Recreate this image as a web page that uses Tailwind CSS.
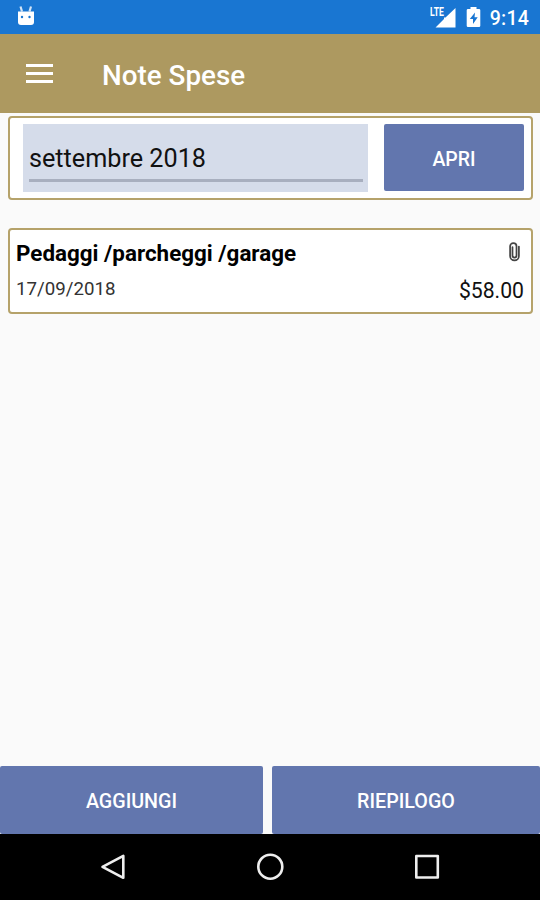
<!DOCTYPE html>
<html lang="it">
<head>
    <meta charset="UTF-8">
    <meta name="viewport" content="width=device-width, initial-scale=1.0">
    <title>Note Spese</title>
    <script src="https://cdn.jsdelivr.net/npm/@tailwindcss/browser@4"></script>
</head>
<body class="bg-[#fafafa] font-['Roboto',sans-serif] text-black">
<div class="flex h-[900px] w-[540px] flex-col overflow-hidden">

    <!-- Status bar -->
    <div class="flex h-[34px] shrink-0 items-center bg-[#1976d2] pl-[17px] pr-[11px] text-white">
        <svg class="mr-auto h-[22px] w-[18px]" viewBox="0 0 18 22" fill="none">
            <path d="M1 5.500h16V16a3 3 0 0 1-3 3H4a3 3 0 0 1-3-3z" fill="#fff"/>
            <path d="M3.500 .5 5 5.500M14 .5 12.500 5.500" stroke="#fff" stroke-opacity=".8" stroke-width="2.200"/>
            <circle cx="5" cy="11" r="1.200" fill="#1976d2"/>
            <circle cx="12.500" cy="11" r="1.200" fill="#1976d2"/>
        </svg>
        <div class="relative h-[22px] w-[26px]">
            <span class="absolute left-0 top-[1px] origin-left scale-x-[.72] text-[12px] font-bold leading-[11px]">LTE</span>
            <svg class="h-[22px] w-[26px]" viewBox="0 0 26 22"><path d="M25.500 2v19.500H5.500L14 13V11.500h1.500z" fill="#fff"/></svg>
        </div>
        <svg class="ml-[10px] h-[22px] w-[15px]" viewBox="0 0 15 22">
            <path d="M4.500 1h6v2H13a1.300 1.300 0 0 1 1.300 1.300v15.400A1.300 1.300 0 0 1 13 21H2a1.300 1.300 0 0 1-1.300-1.300V4.300A1.300 1.300 0 0 1 2 3h2.500z" fill="#fff"/>
            <path d="M9 6.500 3.800 13H7v5l4.700-6.800H8.500z" fill="#1976d2"/>
        </svg>
        <span class="ml-[9px] pt-[3px] text-[19.500px] font-medium leading-none tracking-[.2px]">9:14</span>
    </div>

    <!-- Toolbar -->
    <header class="flex h-[79px] shrink-0 items-center bg-[#ad9960] pl-[26px] text-white">
        <div class="-mt-[1px] flex w-[27px] flex-col gap-[5px]">
            <div class="h-[3px] bg-white"></div>
            <div class="h-[3px] bg-white"></div>
            <div class="h-[3px] bg-white"></div>
        </div>
        <h1 class="ml-[49px] pt-[4px] text-[27.800px] font-medium leading-none">Note Spese</h1>
    </header>

    <main class="flex grow flex-col px-2 pt-[3px]">
        <!-- Month -->
        <section class="flex h-[84px] w-[525px] gap-4 rounded-[4px] border-2 border-[#b5a26a] bg-white pl-[13px] pr-[6px] pt-[6px]">
            <div class="h-[68px] w-[345px] bg-[#d5dcea] px-[6px] pt-[17px]">
                <div class="h-[41px] w-[334px] border-b-[3px] border-[#a8afbf] text-[25.200px] leading-[35px] text-[#111]">settembre 2018</div>
            </div>
            <button class="h-[67px] w-[140px] rounded-[2px] bg-[#6276ae] pt-[4px] text-[19.500px] font-medium text-white">APRI</button>
        </section>

        <!-- Expense -->
        <section class="mt-7 flex h-[86px] w-[525px] justify-between rounded-[4px] border-2 border-[#b5a26a] bg-white pl-[6px] pr-[7px]">
            <div>
                <h2 class="pt-[9px] text-[22.400px] font-bold leading-[28px]">Pedaggi /parcheggi /garage</h2>
                <p class="pt-[10px] text-[18.700px] leading-[24px] text-[#333]">17/09/2018</p>
            </div>
            <div class="flex flex-col items-end">
                <svg class="mr-[4px] mt-[12px] h-[20px] w-[11px]" viewBox="0 0 12 22" preserveAspectRatio="none" fill="none" stroke="#444" stroke-width="1.900" stroke-linecap="round">
                    <path d="M10.800 5v10.500a4.800 4.800 0 0 1-9.600 0V4.700a3.500 3.500 0 0 1 7 0v10.200a2.200 2.200 0 0 1-4.400 0V5.500"/>
                </svg>
                <p class="pt-[15px] text-[21.200px] leading-[28px] text-[#111]">$58.00</p>
            </div>
        </section>
    </main>

    <!-- Actions -->
    <div class="flex h-[68px] shrink-0 gap-[9px] text-[19.700px] font-medium text-white">
        <button class="w-[263px] rounded-[2px] bg-[#6276ae] pt-[3px]">AGGIUNGI</button>
        <button class="grow rounded-[2px] bg-[#6276ae] pt-[3px]">RIEPILOGO</button>
    </div>

    <!-- Navigation bar -->
    <nav class="flex h-[66px] shrink-0 items-center gap-[129px] bg-black pl-[99px]">
        <svg class="h-7 w-7" viewBox="0 0 28 28" fill="none" stroke="#eee" stroke-width="2.600" stroke-linejoin="round"><path d="M24.300 2.800v22L3.500 13.800z"/></svg>
        <svg class="h-7 w-7" viewBox="0 0 28 28" fill="none" stroke="#eee" stroke-width="2.600"><circle cx="14.300" cy="13.700" r="12"/></svg>
        <svg class="h-7 w-7" viewBox="0 0 28 28" fill="none" stroke="#eee" stroke-width="2.600" stroke-linejoin="round"><path d="M3.300 3h21.500v21.500H3.300z"/></svg>
    </nav>
</div>
</body>
</html>
